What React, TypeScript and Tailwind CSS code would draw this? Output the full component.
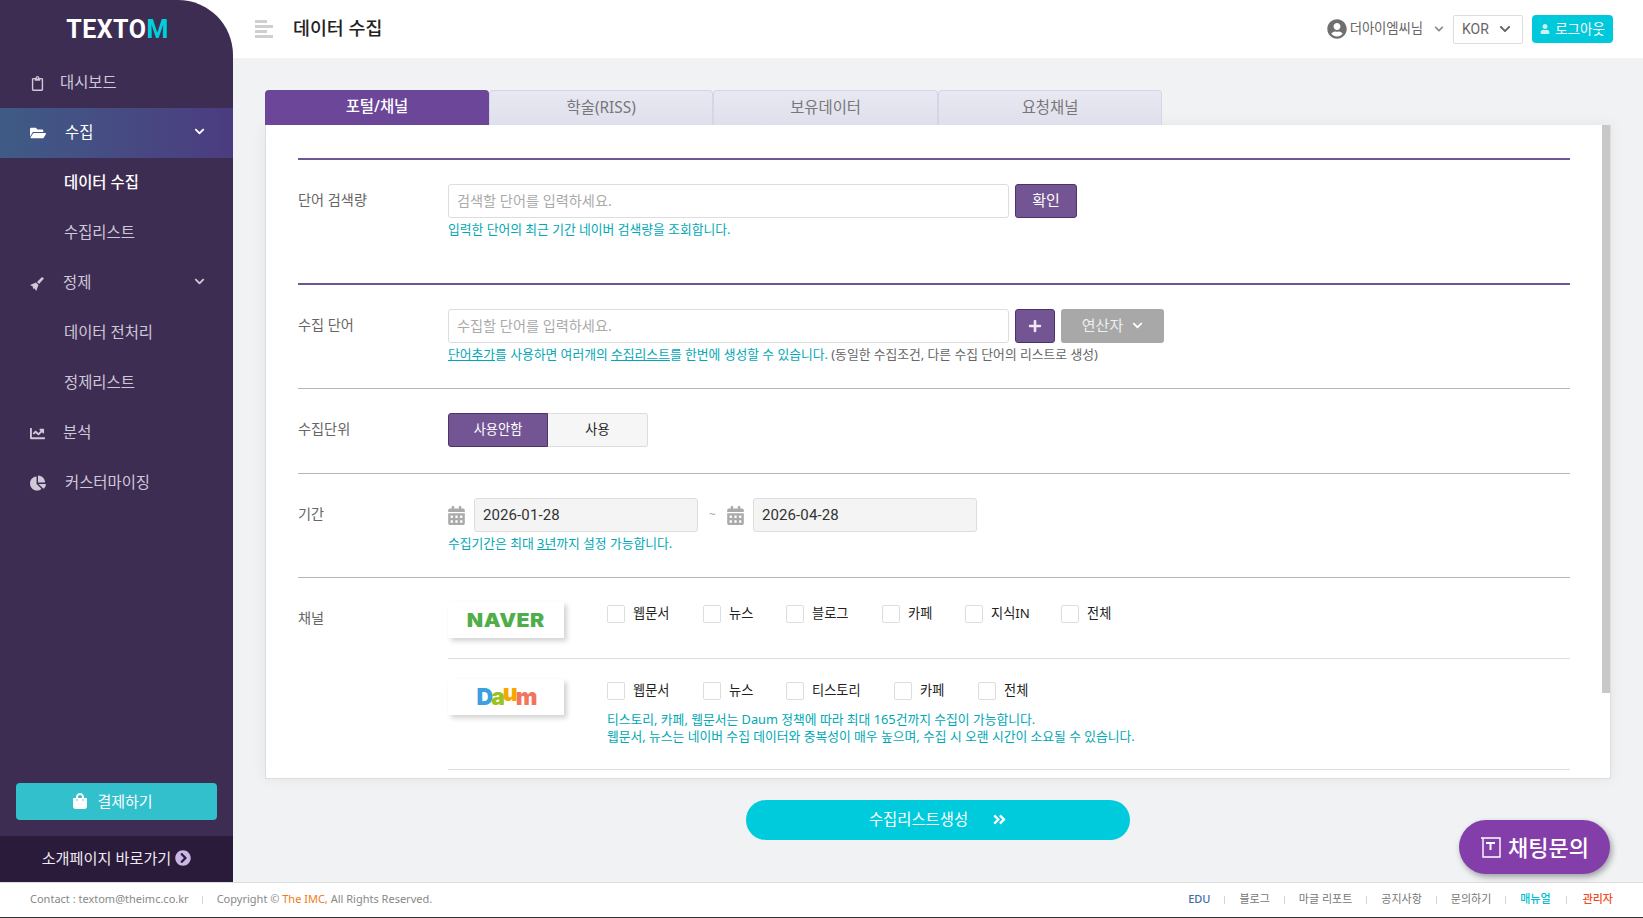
import type { ReactNode } from 'react';
import {
  FaAngleDoubleRight,
  FaCalendarAlt,
  FaChartLine,
  FaChartPie,
  FaChevronCircleRight,
  FaChevronDown,
  FaFolderOpen,
  FaPlus,
  FaRegClipboard,
  FaShoppingBag,
  FaUser,
  FaUserCircle,
} from 'react-icons/fa';

const subClass = 'h-[50px] flex items-center pl-[64px] pb-[1px] text-[15.4px]';

function BroomIcon() {
  return (
    <svg width="15" height="15" viewBox="0 0 15 15" fill="currentColor">
      <path d="M0 9l6-2.5L8.5 9 6.2 15 4.6 12.6 3 12.8 2.8 10.6z" />
      <path d="M7 6l5-5 2 1.6L9 8z" />
    </svg>
  );
}

function MenuRow({ icon, label, labelClass, chevron }: { icon: ReactNode; label: string; labelClass: string; chevron?: boolean }) {
  return (
    <div className="h-[50px] flex items-center relative text-[15.4px] text-[#cfc8d8]">
      <div className="w-[30px] ml-[30px] flex items-center text-[#cfc8d8]">{icon}</div>
      <span className={`pb-[1px] ${labelClass}`}>{label}</span>
      {chevron && <FaChevronDown className="ml-auto mr-[28px] mb-[3px] text-[11px]" />}
    </div>
  );
}

function Sidebar() {
  return (
    <aside className="w-[233px] shrink-0 bg-[#3e2d53] rounded-tr-[55px] flex flex-col">
      <div className="h-[58px] flex items-center justify-center pl-[2px]">
        <span className="font-['Roboto',sans-serif] text-[25px] font-bold tracking-[0.5px] text-white mt-[2px]">
          TEXTO<span className="text-[#00d0dc]">M</span>
        </span>
      </div>
      <MenuRow icon={<FaRegClipboard className="text-[15px]" />} label="대시보드" labelClass="" />
      <div className="h-[50px] flex items-center bg-gradient-to-r from-[#3e5b85] to-[#4b3b80] text-white text-[15.4px]">
        <div className="w-[35px] ml-[30px] flex items-center"><FaFolderOpen className="text-[16px]" /></div>
        <span className="pb-[1px]">수집</span>
        <FaChevronDown className="ml-auto mr-[28px] mb-[3px] text-[11px]" />
      </div>
      <div className={`${subClass} text-white font-medium`}>데이터 수집</div>
      <div className={`${subClass} text-[#cfc8d8]`}>수집리스트</div>
      <MenuRow icon={<BroomIcon />} label="정제" labelClass="ml-[3px]" chevron />
      <div className={`${subClass} text-[#cfc8d8]`}>데이터 전처리</div>
      <div className={`${subClass} text-[#cfc8d8]`}>정제리스트</div>
      <MenuRow icon={<FaChartLine className="text-[15px]" />} label="분석" labelClass="ml-[3px]" />
      <MenuRow icon={<FaChartPie className="text-[16px]" />} label="커스터마이징" labelClass="ml-[5px]" />
      <div className="mt-auto px-[16px] pb-[16px]">
        <button className="w-full h-[37px] pr-[8px] pb-[1px] rounded-[4px] bg-[#32c0cd] text-white text-[15px] flex items-center justify-center gap-[9px]">
          <FaShoppingBag className="text-[16px]" />
          결제하기
        </button>
      </div>
      <div className="h-[46px] pb-[2px] bg-[#2a1b3a] flex items-center justify-center gap-[4px] text-[15.2px] text-[#efe9f5]">
        소개페이지 바로가기
        <FaChevronCircleRight className="text-[16px] text-[#c9b6e4]" />
      </div>
    </aside>
  );
}

function Header() {
  return (
    <header className="h-[58px] bg-white flex items-center pl-[22px] pr-[30px] shrink-0">
      <svg width="18" height="18" viewBox="0 0 18 18" className="mr-[20px] mb-[1px]" fill="#cfcfcf">
        <rect x="0" y="0" width="12" height="3" />
        <rect x="0" y="5" width="18" height="3" />
        <rect x="0" y="10" width="12" height="3" />
        <rect x="0" y="15" width="18" height="3" />
      </svg>
      <h1 className="text-[18.4px] font-medium text-[#222] pb-[2px]">데이터 수집</h1>
      <div className="ml-auto flex items-center">
        <FaUserCircle className="text-[20px] text-[#6f6f6f]" />
        <span className="ml-[3px] text-[13.4px] tracking-[-0.1px] text-[#666] pb-[1px]">더아이엠씨님</span>
        <FaChevronDown className="ml-[11px] text-[10px] text-[#8a8a8a]" />
        <div className="ml-[9px] w-[70px] h-[29px] border border-[#ddd] rounded-[2px] flex items-center pl-[8px] text-[14px] text-[#666] font-['Roboto',sans-serif]">
          KOR
          <FaChevronDown className="ml-[10px] text-[12px] text-[#666]" />
        </div>
        <button className="ml-[9px] w-[81px] h-[28px] rounded-[4px] bg-[#00c9db] text-white text-[13.5px] flex items-center justify-center gap-[5px]">
          <FaUser className="text-[10px] text-[#c8f3f7]" />
          로그아웃
        </button>
      </div>
    </header>
  );
}

function Tabs() {
  const rest = ['학술(RISS)', '보유데이터', '요청채널'];
  return (
    <div className="flex h-[35px]">
      <div className="w-[224px] pb-[1px] rounded-t-[4px] bg-[#6b4699] text-white text-[15.4px] font-medium flex items-center justify-center">포털/채널</div>
      {rest.map((t) => (
        <div key={t} className="w-[224.4px] pb-[1px] rounded-t-[4px] border border-b-0 border-[#d6d5e5] bg-gradient-to-b from-[#e8e8f3] to-[#e0e0ec] text-[#777] text-[15.4px] flex items-center justify-center">{t}</div>
      ))}
    </div>
  );
}

function Help({ children, className = '' }: { children: ReactNode; className?: string }) {
  return <p className={`text-[12.8px] leading-[17px] text-[#00a8b5] ${className}`}>{children}</p>;
}

function Label({ children }: { children: ReactNode }) {
  return <div className="w-[150px] shrink-0 h-[34px] flex items-center text-[14.2px] text-[#666] pb-[2px]">{children}</div>;
}

function TextBox({ placeholder }: { placeholder: string }) {
  return (
    <input
      readOnly
      placeholder={placeholder}
      className="w-[561px] h-[34px] border border-[#ddd] rounded-[3px] px-[8px] pb-[2px] text-[14.2px] bg-white placeholder:text-[#aaa] outline-none"
    />
  );
}

function DateBox({ value }: { value: string }) {
  return (
    <div className="flex items-center gap-[9px]">
      <FaCalendarAlt className="text-[19px] w-[17px] text-[#aaa]" />
      <div className="w-[224px] h-[34px] rounded-[3px] border border-[#ddd] bg-[#f4f4f4] flex items-center pl-[8px] text-[15px] tracking-[0.1px] text-[#333] font-['Roboto',sans-serif]">{value}</div>
    </div>
  );
}

function Check({ label, width }: { label: string; width: string }) {
  return (
    <label className={`flex items-start ${width}`}>
      <span className="w-[18px] h-[18px] border border-[#ddd] rounded-[2px] bg-white" />
      <span className="ml-[8px] text-[13.2px] leading-[18px] text-[#222] -mt-[1px]">{label}</span>
    </label>
  );
}

function LogoBox({ children }: { children: ReactNode }) {
  return (
    <div className="w-[116px] h-[36px] bg-white shadow-[3px_3px_5px_rgba(0,0,0,0.18)] flex items-center justify-center shrink-0">
      {children}
    </div>
  );
}

function Card() {
  return (
    <div className="w-[1346px] h-[654px] bg-white border-x border-b border-[#ddd] shadow-[0_0_14px_rgba(0,0,0,0.06)] flex overflow-hidden">
      <div className="flex-1 pt-[33px] pl-[32px] pr-[32px] min-w-0">
        <div className="h-[2px] bg-[#6f5596]" />
        <section className="h-[123px] pt-[24px] flex">
          <Label>단어 검색량</Label>
          <div>
            <div className="flex gap-[6px]">
              <TextBox placeholder="검색할 단어를 입력하세요." />
              <button className="w-[62px] h-[34px] pb-[2px] rounded-[3px] bg-[#745594] border border-[#4b3466] text-white text-[15px]">확인</button>
            </div>
            <Help className="mt-[3px]">입력한 단어의 최근 기간 네이버 검색량을 조회합니다.</Help>
          </div>
        </section>
        <div className="h-[2px] bg-[#6f5596]" />
        <section className="h-[103px] pt-[24px] flex">
          <Label>수집 단어</Label>
          <div>
            <div className="flex">
              <TextBox placeholder="수집할 단어를 입력하세요." />
              <button className="ml-[6px] w-[40px] h-[34px] rounded-[3px] bg-[#745594] border border-[#4b3466] text-[#f0e6f7] flex items-center justify-center"><FaPlus className="text-[14px]" /></button>
              <button className="ml-[6px] w-[103px] h-[34px] pb-[2px] rounded-[3px] bg-[#a8a8a8] text-[#eee] text-[15px] flex items-center justify-center gap-[9px]">
                연산자
                <FaChevronDown className="text-[11px] text-white" />
              </button>
            </div>
            <Help className="mt-[3px]">
              <span className="underline">단어추가</span>를 사용하면 여러개의 <span className="underline">수집리스트</span>를 한번에 생성할 수 있습니다. <span className="text-[#666]">(동일한 수집조건, 다른 수집 단어의 리스트로 생성)</span>
            </Help>
          </div>
        </section>
        <div className="h-px bg-[#b5b5b5]" />
        <section className="h-[84px] pt-[24px] flex">
          <Label>수집단위</Label>
          <div className="flex h-[34px]">
            <div className="w-[100px] pb-[1px] rounded-l-[3px] bg-[#745594] border border-[#4b3466] text-white text-[13.2px] flex items-center justify-center">사용안함</div>
            <div className="w-[100px] pb-[1px] rounded-r-[3px] bg-[#f6f6f6] border border-l-0 border-[#ddd] text-[#222] text-[13.2px] flex items-center justify-center">사용</div>
          </div>
        </section>
        <div className="h-px bg-[#b5b5b5]" />
        <section className="h-[103px] pt-[24px] flex">
          <Label>기간</Label>
          <div>
            <div className="flex items-center">
              <DateBox value="2026-01-28" />
              <span className="w-[29px] text-center text-[12px] text-[#aaa]">~</span>
              <DateBox value="2026-04-28" />
            </div>
            <Help className="mt-[3px]">수집기간은 최대 <span className="underline">3년</span>까지 설정 가능합니다.</Help>
          </div>
        </section>
        <div className="h-px bg-[#b5b5b5]" />
        <section className="pt-[24px] flex">
          <Label>채널</Label>
          <div className="flex-1 min-w-0">
            <div className="h-[56px] flex items-start border-b border-[#ddd] box-content">
              <LogoBox>
                <span className="inline-block scale-x-[1.12] font-['Inter',sans-serif] font-black text-[19px] leading-none tracking-[0.4px] text-[#4fae4a]">NAVER</span>
              </LogoBox>
              <div className="ml-[43px] mt-[3px] flex">
                <Check label="웹문서" width="w-[96px]" />
                <Check label="뉴스" width="w-[83px]" />
                <Check label="블로그" width="w-[96px]" />
                <Check label="카페" width="w-[83px]" />
                <Check label="지식IN" width="w-[96px]" />
                <Check label="전체" width="w-[80px]" />
              </div>
            </div>
            <div className="pt-[20px] h-[90px] border-b border-[#ddd] box-content flex items-start">
              <LogoBox>
                <span className="font-['Inter',sans-serif] font-black text-[23px] leading-none tracking-[-2px]">
                  <span className="text-[#3c9fe0]">D</span>
                  <span className="text-[#9cc21f]">a</span>
                  <span className="text-[#f7a800] relative bottom-[4px]">u</span>
                  <span className="text-[#f4735c]">m</span>
                </span>
              </LogoBox>
              <div className="ml-[43px] mt-[3px]">
                <div className="flex">
                  <Check label="웹문서" width="w-[96px]" />
                  <Check label="뉴스" width="w-[83px]" />
                  <Check label="티스토리" width="w-[108px]" />
                  <Check label="카페" width="w-[84px]" />
                  <Check label="전체" width="w-[80px]" />
                </div>
                <Help className="mt-[11px]">
                  티스토리, 카페, 웹문서는 Daum 정책에 따라 최대 165건까지 수집이 가능합니다.
                  <br />
                  웹문서, 뉴스는 네이버 수집 데이터와 중복성이 매우 높으며, 수집 시 오랜 시간이 소요될 수 있습니다.
                </Help>
              </div>
            </div>
          </div>
        </section>
      </div>
      <div className="w-[8px] shrink-0">
        <div className="h-[568px] bg-[#c8c8c8]" />
      </div>
    </div>
  );
}

function Sep({ className }: { className: string }) {
  return <span className={`w-px h-[8px] bg-[#d5d5d5] ${className}`} />;
}

function Footer() {
  const links = [
    { t: 'EDU', c: 'text-[#3a6ea5] font-medium' },
    { t: '블로그', c: 'text-[#777]' },
    { t: '마글 리포트', c: 'text-[#777]' },
    { t: '공지사항', c: 'text-[#777]' },
    { t: '문의하기', c: 'text-[#777]' },
    { t: '매뉴얼', c: 'text-[#00bcd0] font-medium' },
    { t: '관리자', c: 'text-[#f04a24] font-medium' },
  ];
  return (
    <footer className="h-[36px] pb-[1px] shrink-0 bg-white border-t border-[#ddd] border-b border-b-[#333] flex items-center pl-[30px] pr-[30px] text-[11px] text-[#888]">
      <span>Contact : textom@theimc.co.kr</span>
      <Sep className="mx-[13.5px]" />
      <span>
        Copyright © <span className="text-[#f47a20]">The IMC,</span> All Rights Reserved.
      </span>
      <div className="ml-auto flex items-center">
        {links.map((l, i) => (
          <span key={l.t} className="flex items-center">
            {i > 0 && <Sep className={i === 6 ? 'mx-[15.5px]' : 'mx-[14px]'} />}
            <span className={l.c}>{l.t}</span>
          </span>
        ))}
      </div>
    </footer>
  );
}

export default function App() {
  return (
    <div className="relative h-[918px] w-[1643px] overflow-hidden flex flex-col bg-white font-['Noto_Sans','Noto_Sans_CJK_KR',sans-serif]">
      <div className="flex-1 flex min-h-0">
        <Sidebar />
        <div className="flex-1 flex flex-col min-w-0">
          <Header />
          <main className="flex-1 bg-[#f1f2f4] pt-[32px] pl-[32px]">
            <Tabs />
            <Card />
            <div className="w-[1346px] flex justify-center mt-[21px]">
              <button className="w-[384px] h-[40px] pb-[1px] rounded-full bg-[#00cbdd] text-white text-[15.4px] flex items-center justify-center gap-[24px]">
                수집리스트생성
                <FaAngleDoubleRight className="text-[15px]" />
              </button>
            </div>
          </main>
        </div>
      </div>
      <Footer />
      <button className="absolute left-[1459px] top-[820px] w-[151px] h-[54px] rounded-full bg-[#833eaa] text-white text-[22px] font-medium shadow-[2px_3px_6px_rgba(0,0,0,0.35)] flex items-center justify-center gap-[7px]">
        <svg width="21" height="21" viewBox="0 0 21 21" fill="none" stroke="#ffffff" strokeWidth="1.4">
          <path d="M1 1h19v19H3V1" />
          <path d="M6 6h9M10.5 6v7" strokeWidth="2" />
        </svg>
        채팅문의
      </button>
    </div>
  );
}
